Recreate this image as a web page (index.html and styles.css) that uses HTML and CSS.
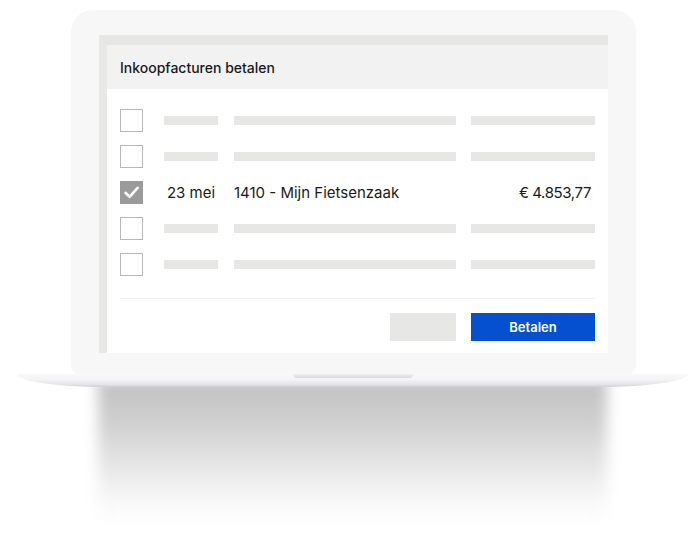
FILE: index.html
```html
<!DOCTYPE html>
<html lang="nl">
<head>
<meta charset="utf-8">
<title>Inkoopfacturen betalen</title>
<link rel="stylesheet" href="styles.css">
</head>
<body>
<div class="scene">
  <div class="lid">
    <div class="screen">
      <div class="header">Inkoopfacturen betalen</div>
      <div class="content">
        <div class="rows">
          <div class="row"><span class="cb"></span><span class="cell"><span class="bar b1"></span></span><span class="cell"><span class="bar b2"></span></span><span class="cell"><span class="bar b3"></span></span></div>
          <div class="row"><span class="cb"></span><span class="cell"><span class="bar b1"></span></span><span class="cell"><span class="bar b2"></span></span><span class="cell"><span class="bar b3"></span></span></div>
          <div class="row">
            <span class="cb on"><svg viewBox="0 0 23 23" width="23" height="23"><path d="M5.5 11.8 L9.6 15.8 L17.6 6.8" fill="none" stroke="#fff" stroke-width="2.6" stroke-linecap="round" stroke-linejoin="round"/></svg></span>
            <span class="cell date">23 mei</span>
            <span class="cell desc">1410 - Mijn Fietsenzaak</span>
            <span class="cell amount">€ 4.853,77</span>
          </div>
          <div class="row"><span class="cb"></span><span class="cell"><span class="bar b1"></span></span><span class="cell"><span class="bar b2"></span></span><span class="cell"><span class="bar b3"></span></span></div>
          <div class="row"><span class="cb"></span><span class="cell"><span class="bar b1"></span></span><span class="cell"><span class="bar b2"></span></span><span class="cell"><span class="bar b3"></span></span></div>
        </div>
        <div class="divider"></div>
        <div class="actions">
          <span class="btn ghost"></span>
          <button class="btn primary" type="button">Betalen</button>
        </div>
      </div>
    </div>
  </div>
  <div class="base"><span class="notch"></span></div>
  <div class="shadow"></div>
</div>
</body>
</html>
```
FILE: styles.css
```css
* { box-sizing: border-box; }
html, body {
  margin: 0;
  padding: 0;
  background: #ffffff;
}
body {
  width: 700px;
  height: 553px;
  overflow: hidden;
  font-family: "Inter", "Liberation Sans", sans-serif;
  color: #1a1a1a;
}
.scene {
  padding-top: 10px;
  display: flex;
  flex-direction: column;
  align-items: flex-start;
}
.lid {
  position: relative;
  z-index: 2;
  margin-left: 71px;
  width: 565px;
  padding: 25px 28px 22px 28px;
  background: #f7f7f7;
  border-radius: 22px 22px 10px 10px;
}
.screen {
  background: #ffffff;
  border-top: 10px solid #e6e6e5;
  border-left: 8px solid #e8e8e7;
}
.header {
  height: 44px;
  background: #f2f2f2;
  padding-left: 13px;
  display: flex;
  align-items: center;
  font-size: 14px;
  font-weight: 500;
  color: #1a1a1a;
}
.content {
  padding: 20px 13px 12px 13px;
}
.rows {
  display: flex;
  flex-direction: column;
  gap: 13px;
}
.row {
  display: grid;
  grid-template-columns: 44px 70px 237px 124px;
  align-items: center;
  height: 23px;
}
.cb {
  width: 23px;
  height: 23px;
  border: 1px solid #b9b9b9;
  background: #fff;
  display: block;
}
.cb.on {
  border: none;
  background: #9b9b9b;
}
.cb svg { display: block; }
.cell {
  display: flex;
  align-items: center;
}
.bar {
  display: block;
  height: 9px;
  background: #e7e7e6;
}
.b1 { width: 54px; }
.b2 { width: 222px; }
.b3 { width: 124px; }
.date {
  width: 54px;
  justify-content: center;
  font-size: 15px;
  white-space: nowrap;
}
.desc {
  font-size: 15px;
  white-space: nowrap;
}
.amount {
  justify-content: flex-end;
  padding-right: 4px;
  font-size: 15px;
  letter-spacing: -0.4px;
  white-space: nowrap;
}
.divider {
  margin-top: 22px;
  height: 1px;
  background: #efefef;
}
.actions {
  margin-top: 14px;
  display: flex;
  justify-content: flex-end;
  gap: 15px;
}
.btn {
  display: block;
  height: 28px;
  border: none;
  margin: 0;
  padding: 0;
}
.ghost {
  width: 66px;
  background: #e7e7e6;
}
.primary {
  width: 124px;
  background: #0550d1;
  color: #ffffff;
  font-family: "Inter", "Liberation Sans", sans-serif;
  font-size: 13px;
  font-weight: 600;
}
.base {
  position: relative;
  z-index: 3;
  margin-left: 17px;
  margin-top: -1px;
  width: 671px;
  height: 13px;
  border-radius: 0 0 90px 90px / 0 0 13px 13px;
  background: linear-gradient(#f9f9f9 0%, #f4f4f6 45%, #e4e4e9 80%, #cdcdd4 100%);
  display: flex;
  justify-content: center;
}
.notch {
  display: block;
  width: 120px;
  height: 4px;
  border-radius: 0 0 4px 4px;
  background: linear-gradient(#f0f0f0, #d9d9dd);
}
.shadow {
  position: relative;
  z-index: 1;
  margin-left: 98px;
  margin-top: -8px;
  width: 509px;
  height: 148px;
  background: linear-gradient(#bfbfbf 0%, #d0d0d0 30%, #e9e9e9 62%, #fafafa 85%, #ffffff 100%);
  filter: blur(7px);
}
```
